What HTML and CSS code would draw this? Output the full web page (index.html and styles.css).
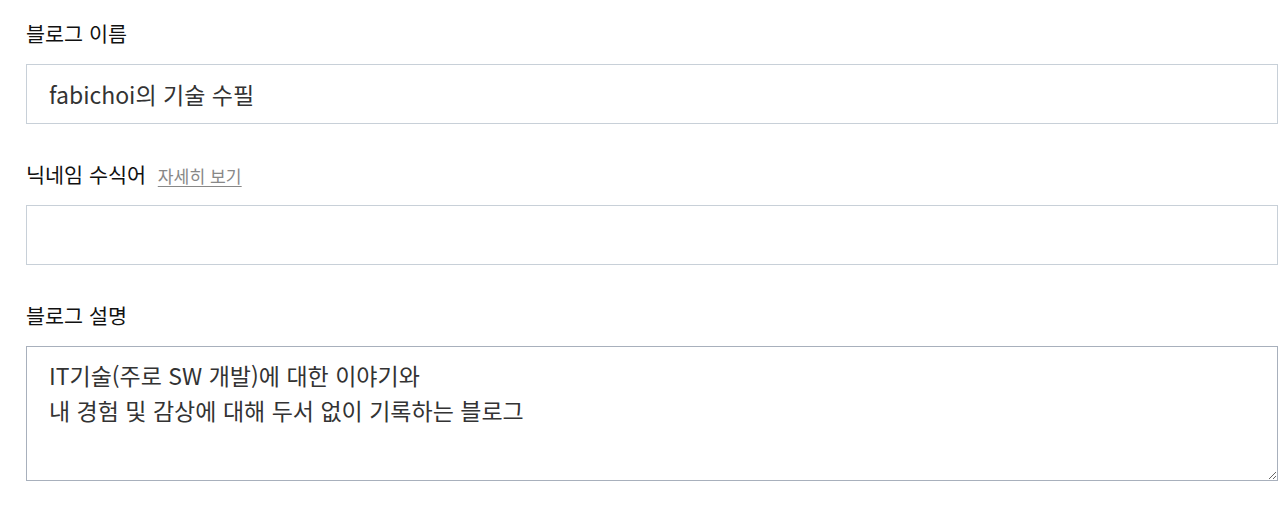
FILE: index.html
```html
<!DOCTYPE html>
<html lang="ko">
<head>
<meta charset="utf-8">
<link rel="stylesheet" href="styles.css">
</head>
<body>
<div class="form">
  <div class="field">
    <div class="label">블로그 이름</div>
    <input class="input" type="text" value="fabichoi의 기술 수필">
  </div>
  <div class="field">
    <div class="label">닉네임 수식어 <a class="more" href="#">자세히 보기</a></div>
    <input class="input" type="text" value="">
  </div>
  <div class="field">
    <div class="label">블로그 설명</div>
    <textarea class="textarea">IT기술(주로 SW 개발)에 대한 이야기와
내 경험 및 감상에 대해 두서 없이 기록하는 블로그</textarea>
  </div>
</div>
</body>
</html>
```
FILE: styles.css
```css
html, body {
  margin: 0;
  padding: 0;
  background: #fff;
}
body {
  font-family: "Noto Sans CJK KR", "Noto Sans", sans-serif;
  color: #222;
}
.form {
  padding: 20px 8px 0 26px;
  display: flex;
  flex-direction: column;
  gap: 37px;
}
.field {
  display: flex;
  flex-direction: column;
  gap: 18px;
}
.label {
  font-size: 20.7px;
  line-height: 26px;
  height: 26px;
  color: #111;
  white-space: nowrap;
}
.more {
  font-size: 17.2px;
  line-height: 26px;
  color: #888;
  margin-left: 6px;
  text-decoration: underline;
  text-underline-offset: 3px;
}
.input, .textarea {
  box-sizing: border-box;
  width: 1252px;
  margin: 0;
  border: 1px solid #c8d0d8;
  background: #fff;
  font-family: "Noto Sans CJK KR", "Noto Sans", sans-serif;
  font-size: 23px;
  color: #333;
  outline: none;
}
.input {
  height: 60px;
  padding: 0 22px;
}
.textarea {
  height: 135px;
  padding: 11px 22px;
  line-height: 35px;
  border-color: #a8b0bc;
  resize: vertical;
  display: block;
}
```
